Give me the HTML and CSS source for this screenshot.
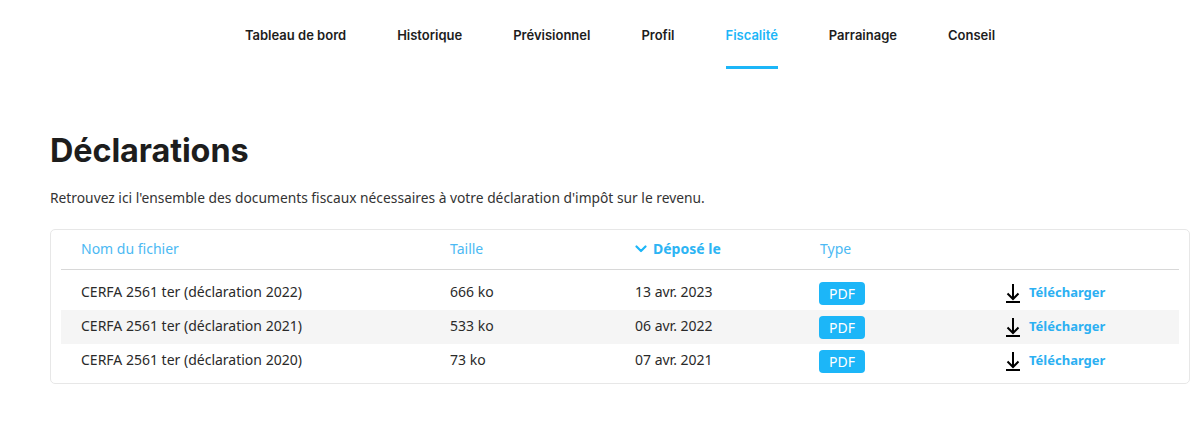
FILE: index.html
```html
<!DOCTYPE html>
<html lang="fr">
<head>
<meta charset="utf-8">
<title>Fiscalité</title>
<link rel="stylesheet" href="styles.css">
</head>
<body>
<nav class="nav">
  <a class="nav-item">Tableau de bord</a>
  <a class="nav-item">Historique</a>
  <a class="nav-item">Prévisionnel</a>
  <a class="nav-item">Profil</a>
  <a class="nav-item active">Fiscalité</a>
  <a class="nav-item">Parrainage</a>
  <a class="nav-item">Conseil</a>
</nav>
<main class="main">
  <h1 class="title">Déclarations</h1>
  <p class="intro">Retrouvez ici l'ensemble des documents fiscaux nécessaires à votre déclaration d'impôt sur le revenu.</p>
  <div class="card">
    <div class="row head">
      <div class="cell">Nom du fichier</div>
      <div class="cell">Taille</div>
      <div class="cell sort"><svg class="chev" viewBox="0 0 12 8" width="12" height="8"><path d="M1.5 1.5 L6 6 L10.5 1.5" fill="none" stroke="currentColor" stroke-width="2.2" stroke-linecap="round" stroke-linejoin="round"/></svg>Déposé le</div>
      <div class="cell">Type</div>
      <div class="cell"></div>
    </div>
    <div class="row">
      <div class="cell">CERFA 2561 ter (déclaration 2022)</div>
      <div class="cell">666 ko</div>
      <div class="cell">13 avr. 2023</div>
      <div class="cell"><span class="badge">PDF</span></div>
      <div class="cell"><a class="dl"><svg class="dl-icon" viewBox="0 0 16 20" width="16" height="20"><path d="M8 1 V16 M2.5 10.5 L8 16 L13.5 10.5 M1 19 H15" fill="none" stroke="#000" stroke-width="2"/></svg>Télécharger</a></div>
    </div>
    <div class="row alt">
      <div class="cell">CERFA 2561 ter (déclaration 2021)</div>
      <div class="cell">533 ko</div>
      <div class="cell">06 avr. 2022</div>
      <div class="cell"><span class="badge">PDF</span></div>
      <div class="cell"><a class="dl"><svg class="dl-icon" viewBox="0 0 16 20" width="16" height="20"><path d="M8 1 V16 M2.5 10.5 L8 16 L13.5 10.5 M1 19 H15" fill="none" stroke="#000" stroke-width="2"/></svg>Télécharger</a></div>
    </div>
    <div class="row">
      <div class="cell">CERFA 2561 ter (déclaration 2020)</div>
      <div class="cell">73 ko</div>
      <div class="cell">07 avr. 2021</div>
      <div class="cell"><span class="badge">PDF</span></div>
      <div class="cell"><a class="dl"><svg class="dl-icon" viewBox="0 0 16 20" width="16" height="20"><path d="M8 1 V16 M2.5 10.5 L8 16 L13.5 10.5 M1 19 H15" fill="none" stroke="#000" stroke-width="2"/></svg>Télécharger</a></div>
    </div>
  </div>
</main>
</body>
</html>
```

FILE: styles.css
```css
* { box-sizing: border-box; }
body {
  margin: 0;
  background: #fff;
  color: #222;
  font-family: "Noto Sans", "Open Sans", sans-serif;
}
.nav {
  display: flex;
  justify-content: center;
  gap: 51px;
  padding-top: 25px;
  height: 69px;
  padding-left: 37px;
}
.nav-item {
  font-family: Inter, "Noto Sans", sans-serif;
  font-weight: 600;
  font-size: 13px;
  color: #1d1d1d;
  height: 44px;
  line-height: 20px;
  border-bottom: 3px solid transparent;
}
.nav-item.active {
  color: #1cb6f8;
  border-bottom-color: #1cb6f8;
}
.main {
  padding: 60px 13px 0 50px;
}
.title {
  margin: 0;
  font-family: Inter, "Noto Sans", sans-serif;
  font-weight: 700;
  font-size: 32.4px;
  line-height: 44px;
  color: #1d1d1d;
  letter-spacing: -0.1px;
}
.intro {
  margin: 16px 0 0;
  font-size: 13.8px;
  line-height: 18px;
  color: #333;
}
.card {
  margin-top: 22px;
  border: 1px solid #e7e7e7;
  border-radius: 5px;
  padding: 0 10px 5px;
}
.row {
  display: grid;
  grid-template-columns: 369px 185px 185px 185px 1fr;
  align-items: center;
  height: 34px;
  font-size: 14px;
  line-height: 18px;
  color: #2a2a2a;
}
.row.head {
  height: 40px;
  margin-bottom: 6px;
  border-bottom: 1px solid #d8d8d8;
  color: #4cb9f3;
  padding-top: 1px;
}
.row.alt { background: #f5f5f5; }
.cell { padding-left: 20px; display: flex; align-items: center; padding-bottom: 2px; }
.sort { font-weight: 700; color: #2cb4f4; }
.chev { margin-right: 6px; color: #1cb6f8; }
.badge {
  display: inline-block;
  background: #1cb6f8;
  color: #fff;
  border-radius: 4px;
  padding: 0 10px;
  height: 23px;
  line-height: 23px;
  font-size: 14px;
  margin-left: -1px;
  margin-top: 2px;
}
.dl {
  display: flex;
  align-items: center;
  font-weight: 700;
  font-size: 13px;
  color: #2cb0f2;
}
.dl-icon { margin-right: 8px; margin-top: 2px; }
```
